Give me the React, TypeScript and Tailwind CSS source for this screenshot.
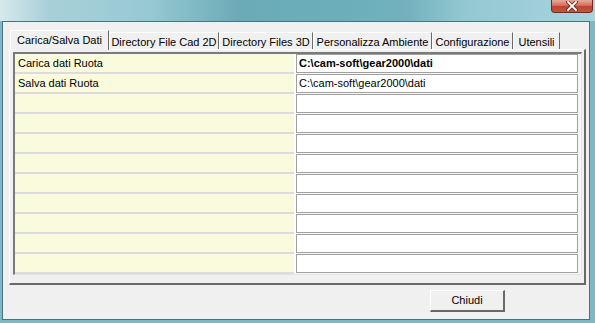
import React from 'react';

const tabs = [
  { label: 'Carica/Salva Dati', w: 'w-[99px]' },
  { label: 'Directory File Cad 2D', w: 'w-[110px]' },
  { label: 'Directory Files 3D', w: 'w-[94px]' },
  { label: 'Personalizza Ambiente', w: 'w-[119px]' },
  { label: 'Configurazione', w: 'w-[81px]' },
  { label: 'Utensili', w: 'w-[47px]' },
];

const rows = [
  { label: 'Carica dati Ruota', path: 'C:\\cam-soft\\gear2000\\dati', bold: true },
  { label: 'Salva dati Ruota', path: 'C:\\cam-soft\\gear2000\\dati', bold: false },
  ...Array.from({ length: 9 }, () => ({ label: '', path: '', bold: false })),
];

const App: React.FC = () => {
  return (
    <div className="w-[595px] h-[323px] flex flex-col bg-[#7db8c5] text-[11px] text-black font-['Liberation_Sans',Arial,sans-serif] overflow-hidden">
      {/* title bar (aero glass) */}
      <div className="h-[21px] flex justify-end pr-[2px] bg-[linear-gradient(90deg,#d6e9ed_0%,#a9d0d9_8%,#97c9d3_25%,#6aabb7_40%,#6cafbb_58%,#70b1bd_68%,#93c8d2_78%,#a8d4dc_100%)]">
        <div className="w-[42px] h-[13px] rounded-b-[4px] border border-t-0 border-[#6b2b22] bg-[linear-gradient(180deg,#e6a99a_0%,#d4705c_45%,#c0412c_55%,#c8563f_100%)] flex items-center justify-center">
          <svg width="12" height="10" viewBox="0 0 12 10">
            <path d="M2 1 L10 9 M10 1 L2 9" stroke="#5a2a22" strokeWidth="3.4" strokeLinecap="square" />
            <path d="M2 1 L10 9 M10 1 L2 9" stroke="#ffffff" strokeWidth="1.8" strokeLinecap="square" />
          </svg>
        </div>
      </div>

      <div className="flex-1 flex pl-[2px] pr-[5px] pb-[3px]">
        <div className="flex-1 flex flex-col bg-[#f0f0f0] border border-[#4a737d]">
          {/* tab control */}
          <div className="ml-[6px] mt-[8px] w-[577px] flex flex-col">
            <div className="flex items-start h-[19px] pl-px">
              {tabs.map((t, i) =>
                i === 0 ? (
                  <div
                    key={t.label}
                    className={`${t.w} h-[20px] -mb-px relative z-10 bg-[#f0f0f0] border-l border-t border-white border-r border-r-[#696969] flex items-center justify-center whitespace-nowrap`}
                  >
                    {t.label}
                  </div>
                ) : (
                  <div
                    key={t.label}
                    className={`${t.w} h-[17px] mt-[2px] bg-[#f0f0f0] border-l border-t border-white border-r border-r-[#696969] flex items-center justify-center pt-[2px] whitespace-nowrap`}
                  >
                    {t.label}
                  </div>
                )
              )}
            </div>
            <div className="h-[236px] border-l border-t border-white border-r-2 border-b-2 border-r-[#696969] border-b-[#696969] bg-[#f0f0f0] pl-[3px] pt-[2px]">
              {/* grid */}
              <div className="w-[569px] border-l-2 border-t-2 border-l-[#7a7a7a] border-t-[#7a7a7a] border-r border-b border-r-[#e3e3e3] border-b-[#e3e3e3] bg-[#f7f7f7] flex flex-col">
                {rows.map((r, i) => (
                  <div key={i} className="h-[20px] flex">
                    <div className="w-[279px] h-[20px] bg-[#fafadc] border-b-2 border-[#dcdcdc] pl-[3px] flex items-center">
                      {r.label}
                    </div>
                    <div className="w-[2px] bg-white" />
                    <div
                      className={`w-[282px] h-[19px] bg-white border border-[#a0a0a0] pl-[2px] flex items-center whitespace-nowrap ${r.bold ? 'font-bold' : ''}`}
                    >
                      {r.path}
                    </div>
                  </div>
                ))}
              </div>
            </div>
          </div>

          {/* buttons */}
          <div className="flex justify-end mt-[5px] pr-[84px]">
            <button className="w-[75px] h-[22px] bg-[#f0f0f0] border-l border-t border-white border-r-2 border-b-2 border-r-[#696969] border-b-[#696969] flex items-center justify-center">
              Chiudi
            </button>
          </div>
        </div>
      </div>
    </div>
  );
};

export default App;
